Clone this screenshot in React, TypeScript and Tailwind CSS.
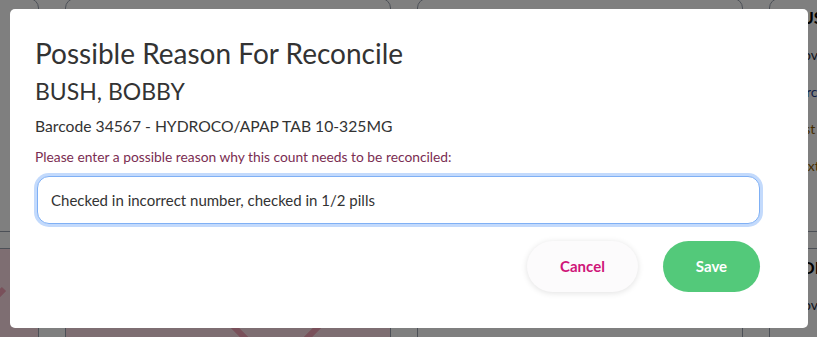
import React, { useState } from 'react';

interface CardLine {
  text: string;
  tone?: 'name' | 'plain' | 'link' | 'warn';
}

interface PatientCardProps {
  lines: CardLine[];
  flagged?: boolean;
}

const toneClass = (tone: CardLine['tone']) => {
  switch (tone) {
    case 'name':
      return 'text-[17px] font-bold text-black';
    case 'link':
      return 'text-[14px] text-[#1e3a8a]';
    case 'warn':
      return 'text-[14px] text-[#8a5a00]';
    default:
      return 'text-[14px] text-gray-800';
  }
};

// Cards of the page that sits behind the dialog
const PatientCard: React.FC<PatientCardProps> = ({ lines, flagged }) => (
  <div
    className={`relative h-[234px] w-[326px] shrink-0 overflow-hidden rounded-[10px] border border-gray-400 px-5 ${
      flagged ? 'bg-[#fcdde4]' : 'bg-white'
    }`}
  >
    {flagged && (
      <svg className="absolute left-[110px] top-[20px]" width="200" height="200" viewBox="0 0 200 200">
        <path d="M20 20 L180 180 M180 20 L20 180" stroke="#f2a0b4" strokeWidth="6" fill="none" />
      </svg>
    )}
    {lines.map((line, i) => (
      <div key={i} className={`relative leading-[37px] whitespace-nowrap ${toneClass(line.tone)}`}>
        {line.text}
      </div>
    ))}
  </div>
);

const App: React.FC = () => {
  const [reason, setReason] = useState('Checked in incorrect number, checked in 1/2 pills');

  return (
    <div className="relative h-[337px] w-[817px] overflow-hidden bg-white font-['Lato','Open_Sans',sans-serif]">
      {/* page behind the overlay */}
      <div className="ml-[-287px] mt-[-2px] flex flex-col gap-4">
        <div className="flex gap-[26px]">
          <PatientCard lines={[{ text: 'JONES, MARY', tone: 'name' }]} />
          <PatientCard lines={[{ text: 'SMITH, JOHN', tone: 'name' }]} />
          <PatientCard lines={[{ text: 'DAVIS, ANN', tone: 'name' }]} />
          <PatientCard
            lines={[
              { text: 'BUSH, BOBBY', tone: 'name' },
              { text: 'Provider', tone: 'plain' },
              { text: 'Barcode 34567', tone: 'link' },
              { text: 'Last count', tone: 'warn' },
              { text: 'Next count', tone: 'warn' },
            ]}
          />
        </div>
        <div className="flex gap-[26px]">
          <PatientCard lines={[{ text: 'WHITE, TOM', tone: 'name' }]} flagged />
          <PatientCard
            lines={[
              { text: 'GREEN, AL', tone: 'name' },
              { text: 'Provider', tone: 'plain' },
              { text: 'Barcode 12455', tone: 'plain' },
            ]}
            flagged
          />
          <PatientCard
            lines={[
              { text: 'BROWN, JO', tone: 'name' },
              { text: 'Provider', tone: 'plain' },
              { text: 'Barcode 34547', tone: 'plain' },
            ]}
          />
          <PatientCard
            lines={[
              { text: 'ADLER, JIM', tone: 'name' },
              { text: 'Provider', tone: 'plain' },
              { text: 'BUNL 22', tone: 'plain' },
            ]}
          />
        </div>
      </div>

      <div className="absolute inset-0 bg-black/50" />

      {/* dialog */}
      <div className="absolute left-[10px] top-[9px] h-[319px] w-[798px] rounded-[5px] bg-white pl-[25px] pr-[47px] pt-[27px]">
        <h2 className="text-[28px] leading-[35px] text-[#333333]">Possible Reason For Reconcile</h2>
        <div className="mt-[5px] text-[23px] leading-[30px] text-[#333333]">BUSH, BOBBY</div>
        <div className="mt-[10px] text-[15.7px] leading-[20px] text-[#333333]">Barcode 34567 - HYDROCO/APAP TAB 10-325MG</div>
        <label className="mt-[12px] block text-[13.8px] leading-[18px] text-[#7a2d52]">
          Please enter a possible reason why this count needs to be reconciled:
        </label>
        <input
          value={reason}
          onChange={(e) => setReason(e.target.value)}
          className="mt-[10px] ml-[2px] h-[48px] w-[723px] rounded-[12px] border border-[#7fb0f5] bg-white px-[13px] text-[15px] text-[#333333] outline-none ring-[3px] ring-[#c3dafc]"
        />
        <div className="mt-[17px] flex justify-end gap-[25px] pr-[1px]">
          <button className="h-[51px] w-[111px] rounded-full bg-[#fcfbfc] text-[15px] font-bold text-[#cf1579] shadow-[0_1px_6px_rgba(0,0,0,0.12)]">
            Cancel
          </button>
          <button className="h-[51px] w-[97px] rounded-full bg-[#53c97a] text-[15px] font-bold text-white">
            Save
          </button>
        </div>
      </div>
    </div>
  );
};

export default App;
